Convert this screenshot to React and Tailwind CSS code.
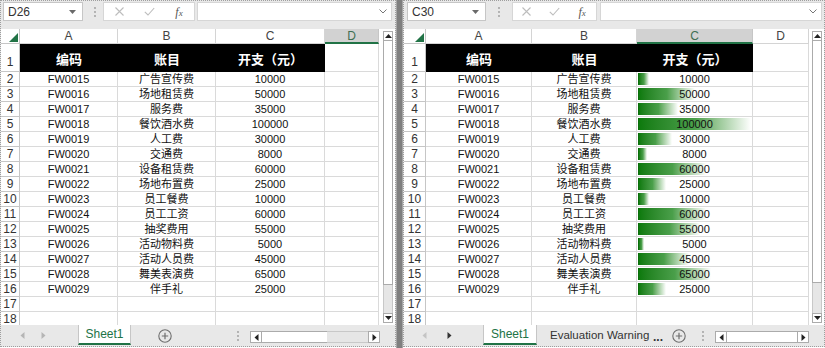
const rows = [
  ["FW0015", "广告宣传费", 10000],
  ["FW0016", "场地租赁费", 50000],
  ["FW0017", "服务费", 35000],
  ["FW0018", "餐饮酒水费", 100000],
  ["FW0019", "人工费", 30000],
  ["FW0020", "交通费", 8000],
  ["FW0021", "设备租赁费", 60000],
  ["FW0022", "场地布置费", 25000],
  ["FW0023", "员工餐费", 10000],
  ["FW0024", "员工工资", 60000],
  ["FW0025", "抽奖费用", 55000],
  ["FW0026", "活动物料费", 5000],
  ["FW0027", "活动人员费", 45000],
  ["FW0028", "舞美表演费", 65000],
  ["FW0029", "伴手礼", 25000],
];

const panes = {
  left: {
    cell: "D26",
    outer: "w-[396px]",
    nameBox: "ml-[2px] w-[80px]",
    dots: "ml-[8px]",
    fnBox: "ml-[4px] w-[92px]",
    fBox: "ml-[2px] mr-[3px]",
    rowHead: "w-[19px]",
    cols: [
      { key: "A", w: "w-[98px]" },
      { key: "B", w: "w-[98px]" },
      { key: "C", w: "w-[109px]" },
      { key: "D", w: "w-[54px]" },
    ],
    sel: "D",
    scroll: "w-[16px] pl-[4px] pr-[2px]",
    thumb: "h-[244px]",
    bars: false,
  },
  right: {
    cell: "C30",
    outer: "w-[422px]",
    nameBox: "ml-[3px] w-[79px]",
    dots: "ml-[9px]",
    fnBox: "ml-[9px] w-[85px]",
    fBox: "ml-[3px] mr-[2px]",
    rowHead: "w-[22px]",
    cols: [
      { key: "A", w: "w-[106px]" },
      { key: "B", w: "w-[105px]" },
      { key: "C", w: "w-[116px]" },
      { key: "D", w: "w-[56px]" },
    ],
    sel: "C",
    scroll: "w-[15px] pl-[3px] pr-[2px]",
    thumb: "h-[242px]",
    bars: true,
  },
};

const Tri = ({ dir = "left", color = "#b5b5b5" }) => (
  <svg width="5" height="7" viewBox="0 0 5 7" className="shrink-0">
    <polygon points={dir === "left" ? "4.5,0 4.5,7 0.5,3.5" : "0.5,0 0.5,7 4.5,3.5"} fill={color} />
  </svg>
);

const Dots = () => (
  <svg width="4" height="12" viewBox="0 0 4 12" className="shrink-0">
    <circle cx="2" cy="2" r="0.9" fill="#9a9a9a" />
    <circle cx="2" cy="6" r="0.9" fill="#9a9a9a" />
    <circle cx="2" cy="10" r="0.9" fill="#9a9a9a" />
  </svg>
);

const PlusCircle = () => (
  <svg width="14" height="14" viewBox="0 0 14 14" className="shrink-0">
    <circle cx="7" cy="7" r="6.2" fill="none" stroke="#6e6e6e" strokeWidth="1.1" />
    <path d="M7 3.8v6.4M3.8 7h6.4" stroke="#6e6e6e" strokeWidth="1.2" />
  </svg>
);

const HScroll = ({ w, thumb }) => (
  <div className={`flex h-[12px] mt-[6px] ${w}`}>
    <div className="w-[12px] border border-[#ababab] bg-white flex items-center justify-center">
      <Tri dir="left" color="#222" />
    </div>
    <div className={`${thumb} border-y border-[#ababab] bg-white`} />
    <div className="flex-1 border-y border-[#c8c8c8] bg-[#e6e6e6]" />
    <div className="w-[12px] border border-[#ababab] bg-white flex items-center justify-center">
      <Tri dir="right" color="#222" />
    </div>
  </div>
);

function FormulaBar({ p }) {
  return (
    <div className="flex items-start h-[28px] pt-[1px]">
      <div className={`${p.nameBox} h-[19px] shrink-0 bg-white border border-[#c6c6c6] flex items-center justify-between pl-[4px] pr-[6px]`}>
        <span className="text-[12px] text-[#333]">{p.cell}</span>
        <svg width="7" height="4" viewBox="0 0 7 4">
          <polygon points="0,0 7,0 3.5,4" fill="#6a6a6a" />
        </svg>
      </div>
      <div className={`${p.dots} w-[8px] h-[19px] flex items-center justify-center shrink-0`}>
        <Dots />
      </div>
      <div className={`${p.fnBox} h-[19px] shrink-0 bg-white border border-[#d6d6d6] flex items-center`}>
        <span className="flex-1 flex justify-center">
          <svg width="9" height="9" viewBox="0 0 9 9">
            <path d="M0.5 0.5l8 8M8.5 0.5l-8 8" stroke="#bdbdbd" strokeWidth="1.1" />
          </svg>
        </span>
        <span className="flex-1 flex justify-center">
          <svg width="11" height="9" viewBox="0 0 11 9">
            <polyline points="0.8,4.8 4,8 10.2,1" fill="none" stroke="#bdbdbd" strokeWidth="1.1" />
          </svg>
        </span>
        <span className="flex-1 flex justify-center font-['Liberation_Serif',serif] italic text-[12px] text-[#555] leading-none">
          f<span className="text-[9px] mt-[3px]">x</span>
        </span>
      </div>
      <div className={`${p.fBox} flex-1 h-[19px] bg-white border border-[#d6d6d6] flex items-center justify-end pr-[4px]`}>
        <svg width="8" height="5" viewBox="0 0 8 5">
          <polyline points="0.5,0.5 4,4 7.5,0.5" fill="none" stroke="#777" strokeWidth="1" />
        </svg>
      </div>
    </div>
  );
}

function Grid({ p }) {
  const barCol = p.cols[2];
  return (
    <div className="flex-1 overflow-hidden bg-white">
      {/* column headers */}
      <div className="flex h-[15px]">
        <div className={`${p.rowHead} shrink-0 border-r border-b border-[#c6c6c6] flex items-end justify-end pr-[1px] pb-[1px]`}>
          <svg width="9" height="9" viewBox="0 0 9 9">
            <polygon points="9,0 9,9 0,9" fill="#217346" />
          </svg>
        </div>
        {p.cols.map((c) =>
          c.key === p.sel ? (
            <div key={c.key} className={`${c.w} shrink-0 bg-[#d2d2d2] border-r border-[#c6c6c6] border-b-2 border-b-[#217346] flex items-center justify-center text-[12px] text-[#3f6f52] leading-none`}>
              {c.key}
            </div>
          ) : (
            <div key={c.key} className={`${c.w} shrink-0 border-r border-b border-[#d4d4d4] flex items-center justify-center text-[12px] text-[#444] leading-none`}>
              {c.key}
            </div>
          )
        )}
      </div>

      {/* row 1 header */}
      <div className="flex h-[28px]">
        <div className={`${p.rowHead} shrink-0 border-r border-b border-[#c6c6c6] flex items-end justify-center pb-[3px] text-[12px] text-[#333] leading-none`}>
          1
        </div>
        {["编码", "账目", "开支（元）"].map((t, i) => (
          <div key={t} className={`${p.cols[i].w} shrink-0 bg-black text-white font-bold text-[13px] flex items-center justify-center pt-[3px]`}>
            {t}
          </div>
        ))}
        <div className={`${p.cols[3].w} shrink-0 border-r border-b border-[#dadada]`} />
      </div>

      {/* data rows */}
      {rows.map(([code, item, amt], i) => (
        <div key={code} className="flex h-[15px]">
          <div className={`${p.rowHead} shrink-0 border-r border-b border-[#c6c6c6] flex items-center justify-center text-[12px] text-[#333] leading-none`}>
            {i + 2}
          </div>
          <div className={`${p.cols[0].w} shrink-0 border-r border-b border-[#dadada] flex items-center justify-center leading-none`}>
            {code}
          </div>
          <div className={`${p.cols[1].w} shrink-0 border-r border-b border-[#dadada] flex items-center justify-center leading-none`}>
            {item}
          </div>
          <div className={`${barCol.w} shrink-0 relative border-r border-b border-[#dadada] flex items-center justify-center leading-none`}>
            {p.bars && (
              <div
                className="absolute left-[1px] top-[1px] h-[12px] border-l border-[#0a6e0a] bg-gradient-to-r from-[#0c7a0c] via-[#4a9f4a] to-[#ffffff]"
                style={{ width: `${Math.round((amt / 100000) * 113)}px` }}
              />
            )}
            <span className="relative">{amt}</span>
          </div>
          <div className={`${p.cols[3].w} shrink-0 border-r border-b border-[#dadada]`} />
        </div>
      ))}

      {[17, 18].map((n) => (
        <div key={n} className="flex h-[15px]">
          <div className={`${p.rowHead} shrink-0 border-r border-b border-[#c6c6c6] flex items-center justify-center text-[12px] text-[#333] leading-none`}>
            {n}
          </div>
          {p.cols.map((c) => (
            <div key={c.key} className={`${c.w} shrink-0 border-r border-b border-[#dadada]`} />
          ))}
        </div>
      ))}
    </div>
  );
}

function VScroll({ p }) {
  return (
    <div className={`${p.scroll} shrink-0 bg-white flex flex-col pt-[2px] pb-[2px]`}>
      <div className="h-[10px] border border-[#ababab] bg-white flex items-center justify-center">
        <svg width="7" height="4" viewBox="0 0 7 4">
          <polygon points="0,4 7,4 3.5,0" fill="#222" />
        </svg>
      </div>
      <div className={`${p.thumb} border-x border-b border-[#ababab] bg-white`} />
      <div className="flex-1 border-x border-[#c8c8c8] bg-[#e6e6e6]" />
      <div className="h-[10px] border border-[#ababab] bg-white flex items-center justify-center">
        <svg width="7" height="4" viewBox="0 0 7 4">
          <polygon points="0,0 7,0 3.5,4" fill="#222" />
        </svg>
      </div>
    </div>
  );
}

function Pane({ p, children }) {
  return (
    <div className={`${p.outer} shrink-0 h-[347px] flex flex-col border border-dotted border-[#9e9e9e] bg-[#e8e8e8]`}>
      <FormulaBar p={p} />
      <div className="flex h-[296px]">
        <Grid p={p} />
        <VScroll p={p} />
      </div>
      <div className="flex h-[21px] items-start text-[12px]">{children}</div>
    </div>
  );
}

export default function App() {
  return (
    <div className="w-[825px] h-[348px] bg-white flex font-['Liberation_Sans','Noto_Sans_CJK_SC',sans-serif] text-[11px] text-[#111] overflow-hidden">
      <Pane p={panes.left}>
        <div className="w-[77px] h-[21px] flex items-center shrink-0">
          <span className="ml-[19px]"><Tri dir="left" /></span>
          <span className="ml-[16px]"><Tri dir="right" /></span>
        </div>
        <div className="w-[53px] h-[20px] shrink-0 bg-white border-x border-[#c6c6c6] border-b-2 border-b-[#217346] flex items-center justify-center text-[#217346]">
          Sheet1
        </div>
        <div className="ml-[27px] h-[21px] flex items-center">
          <PlusCircle />
        </div>
        <div className="ml-[64px] h-[21px] flex items-center">
          <Dots />
        </div>
        <div className="ml-[10px]">
          <HScroll w="w-[130px]" thumb="w-[65px]" />
        </div>
      </Pane>

      <div className="w-[7px] h-[348px] shrink-0 bg-[#7f7f7f] border-x border-[#a5a5a5]" />

      <Pane p={panes.right}>
        <div className="w-[79px] h-[21px] flex items-center shrink-0">
          <span className="ml-[18px]"><Tri dir="left" color="#c4c4c4" /></span>
          <span className="ml-[20px]"><Tri dir="right" color="#333" /></span>
        </div>
        <div className="w-[54px] h-[20px] shrink-0 bg-white border-x border-[#c6c6c6] border-b-2 border-b-[#217346] flex items-center justify-center text-[#217346]">
          Sheet1
        </div>
        <div className="w-[116px] h-[21px] shrink-0 flex items-center pl-[13px] text-[11.5px] text-[#333] whitespace-nowrap">
          Evaluation Warning
        </div>
        <div className="w-[14px] h-[21px] shrink-0 flex items-center text-[#333] font-bold leading-none pt-[2px]">
          ...
        </div>
        <div className="ml-[5px] h-[21px] flex items-center">
          <PlusCircle />
        </div>
        <div className="ml-[15px] h-[21px] flex items-center">
          <Dots />
        </div>
        <div className="ml-[10px]">
          <HScroll w="w-[94px]" thumb="w-[70px]" />
        </div>
      </Pane>
    </div>
  );
}
